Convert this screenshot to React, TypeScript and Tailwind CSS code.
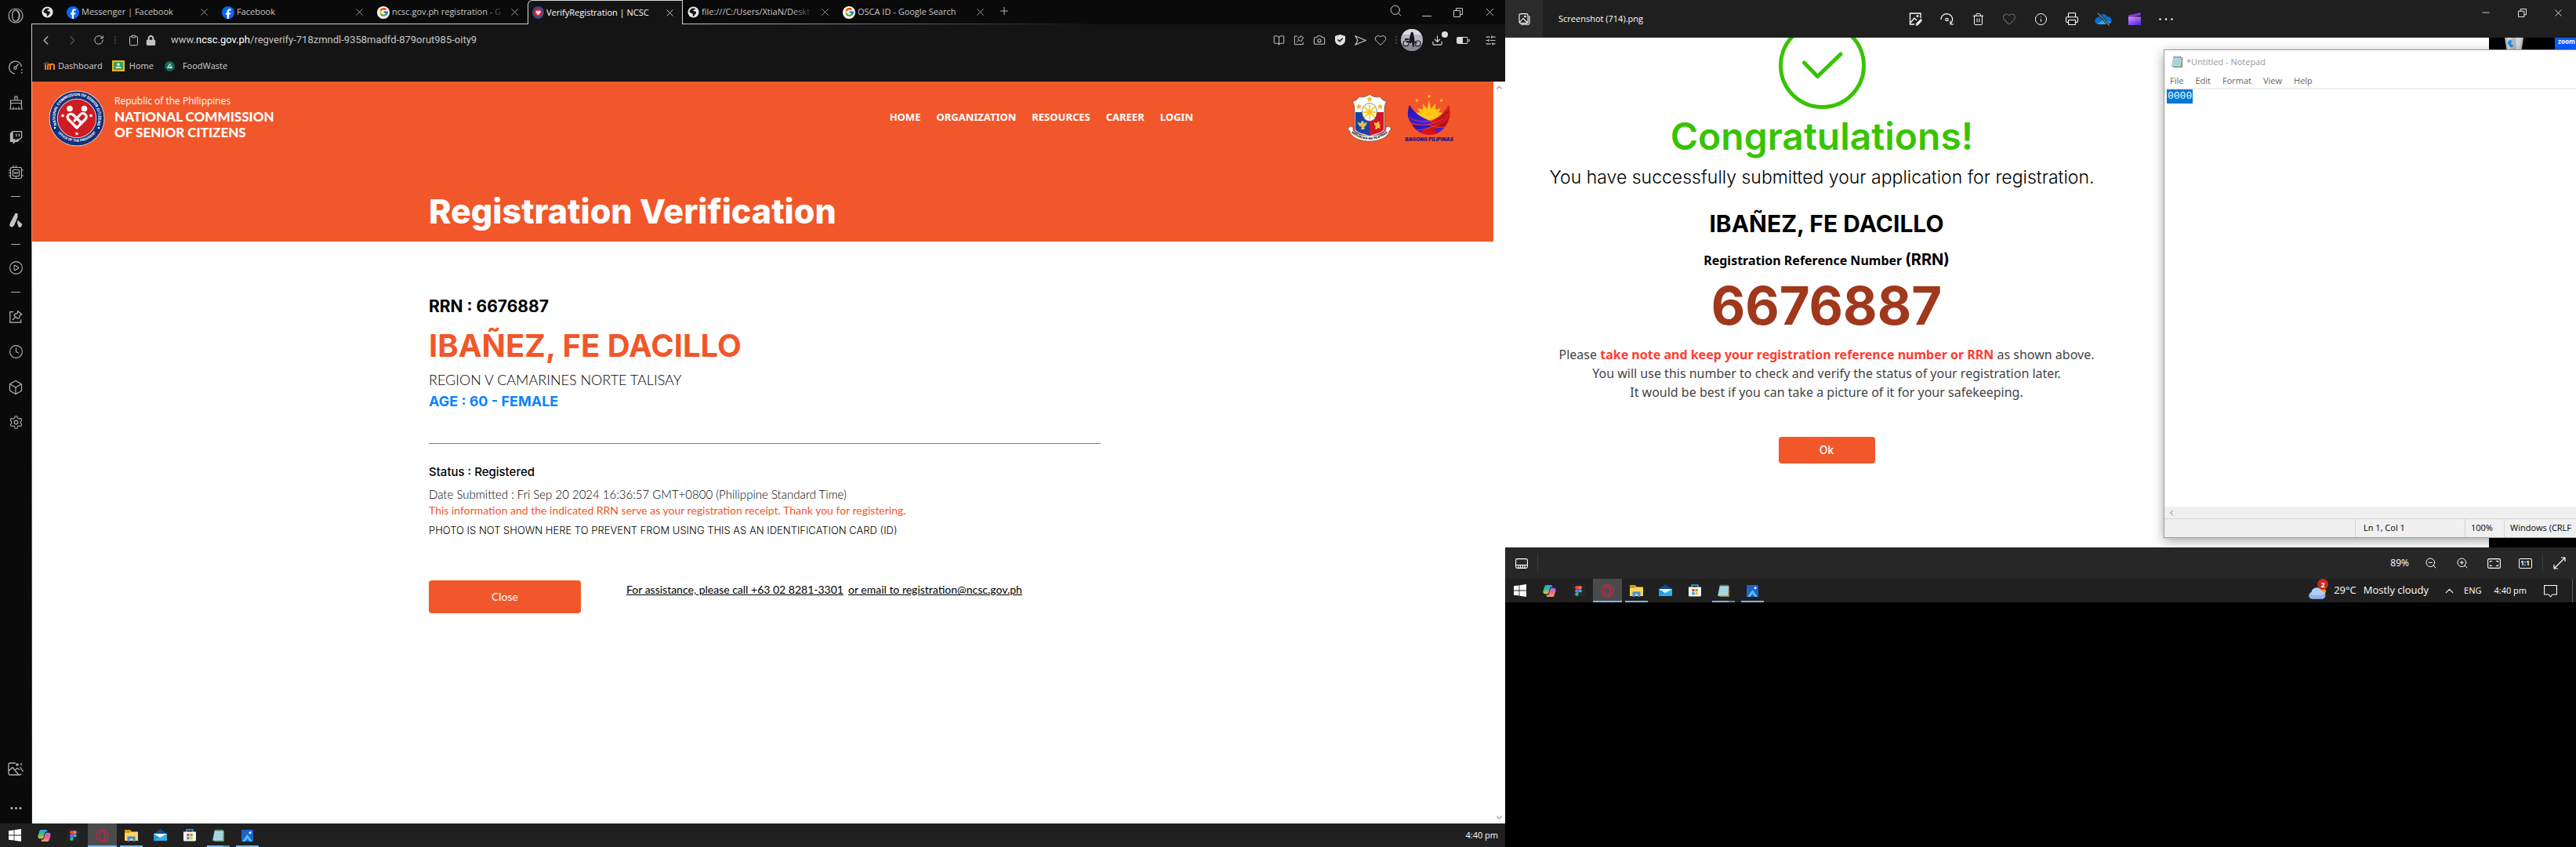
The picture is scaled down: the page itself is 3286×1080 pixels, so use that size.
import React from "react";
import {
  Search, Minus, X, ChevronLeft, ChevronRight, RotateCw, Clipboard, BookOpen, Camera, Heart,
  Clock, Box, Settings, CirclePlay, Ellipsis, Plus, Trash2, Info, Printer,
  ZoomIn, ZoomOut, ChevronUp, ChevronDown, SlidersHorizontal, Download,
} from "lucide-react";
import { FcGoogle } from "react-icons/fc";
import { FaTwitch, FaLock } from "react-icons/fa";

const ui = "font-['Open_Sans','Noto_Sans',sans-serif]";

/* ---------- Shared drawings ---------- */

const OperaIcon = ({ size, color }: { size: number; color: string }) => (
  <svg width={size} height={size} viewBox="0 0 20 20" fill="none" stroke={color} strokeWidth="1.2">
    <circle cx="10" cy="10" r="9" />
    <ellipse cx="10" cy="10" rx="4.4" ry="7.2" />
    <path d="M12 3.2a9 9 0 0 1 0 13.6" />
  </svg>
);

const FacebookIcon = () => (
  <svg width="16" height="16" viewBox="0 0 16 16" className="shrink-0">
    <circle cx="8" cy="8" r="8" fill="#0866ff" />
    <path d="M6.7 16v-5.4H5V8.2h1.7V7c0-2.6 1.2-3.8 3.6-3.8.4 0 1 .1 1.3.2v2.1h-.9c-1.200 0-1.600.5-1.600 1.600v1.100h2.300l-.4 2.400H9.100V16z" fill="#fff" />
  </svg>
);

const GoogleIcon = () => (
  <span className="flex h-4 w-4 shrink-0 items-center justify-center rounded-full bg-white">
    <FcGoogle size={13} />
  </span>
);

const GlobeIcon = () => (
  <svg width="15" height="15" viewBox="0 0 16 16" className="shrink-0">
    <circle cx="8" cy="8" r="7.500" fill="#e8e8ea" />
    <path d="M5 3.500c2-1.500 5-1 6 .5-1.500.2-2 1-3.500 1.200 0 1.300 1.500 1.200 3 1.600 2 .6 1.600 3-.2 4-.8 1-1.300 2.700-2.800 2.700-.6-1 .2-2.500-.6-3.300C5.500 9.500 3.500 9 2.500 7.500 3 6 4 4.500 5 3.500z" fill="#101010" />
  </svg>
);

const PinBoxIcon = ({ size }: { size: number }) => (
  <svg width={size} height={size} viewBox="0 0 20 20" fill="none" stroke="currentColor" strokeWidth="1.400">
    <path d="M7 3H2v15h15.500v-4" />
    <path d="M13 2l5.500 4.500-2.500 1.200-1 4-2.500.5-4.700-4 1-2.200 3.700-1z" />
    <path d="M9.500 10.500L5.500 14.500" />
  </svg>
);

const RestoreIcon = ({ size }: { size: number }) => (
  <svg width={size} height={size} viewBox="0 0 12 12" fill="none" stroke="currentColor" strokeWidth="1">
    <path d="M3.500 3.500V.5h8v8h-3" />
    <path d="M.5 3.500h8v8h-8z" />
  </svg>
);

const SealLogo = ({ size }: { size: number }) => (
  <svg width={size} height={size} viewBox="0 0 72 72" className="shrink-0">
    <defs>
      <path id="sealTop" d="M10 43.500A27.500 27.500 0 1 1 62 43.500" />
      <path id="sealBottom" d="M9 50A31 31 0 0 0 63 50" />
    </defs>
    <circle cx="36" cy="36" r="35.500" fill="#e6d9d0" />
    <circle cx="36" cy="36" r="34.600" fill="#12317c" />
    <circle cx="36" cy="36" r="25.200" fill="#e6c9c0" />
    <circle cx="36" cy="36" r="24.200" fill="#cf1b22" />
    <g fill="#fff" fontFamily="Inter, sans-serif" fontWeight="700" fontSize="4.700">
      <text textAnchor="middle"><textPath href="#sealTop" startOffset="50%">NATIONAL COMMISSION OF SENIOR CITIZENS</textPath></text>
      <text textAnchor="middle" fontSize="4.200"><textPath href="#sealBottom" startOffset="50%">OFFICE OF THE PRESIDENT</textPath></text>
    </g>
    <circle cx="27" cy="23.500" r="3.800" fill="#fff" />
    <circle cx="45.500" cy="23.500" r="3.800" fill="#fff" />
    <path d="M36 48L25.500 37.500c-4-5 2.500-9.500 6-6L41 41M31 43l-1-1M36 48l11-11c4-5-3-10-6.500-6L33 39" fill="none" stroke="#fff" strokeWidth="3.200" strokeLinecap="round" />
    <g fill="#fff">
      <path d="M18 30l.8 1.500 1.700.2-1.200 1.200.3 1.700-1.600-.8-1.600.8.3-1.700-1.200-1.200 1.700-.2z" />
      <path d="M54 30l.8 1.500 1.700.2-1.200 1.200.3 1.700-1.600-.8-1.600.8.3-1.700-1.200-1.200 1.700-.2z" />
      <path d="M36 53l.8 1.500 1.700.2-1.200 1.200.3 1.700-1.600-.8-1.600.8.3-1.700-1.200-1.200 1.700-.2z" />
      <circle cx="8" cy="48" r="1.200" />
      <circle cx="64" cy="48" r="1.200" />
    </g>
  </svg>
);

const star = "M0-3.200L.9-1 3.200-1 1.400.5 2 2.800 0 1.500-2 2.800-1.400.5-3.200-1-.9-1z";
const rays = [0, 45, 90, 135, 180, 225, 270, 315];

const CoatOfArms = () => (
  <svg width="56" height="62" viewBox="0 0 56 62">
    <defs><path id="ribbon" d="M4 50Q28 68 52 50" /></defs>
    <path d="M28 1C31 4 37 6 41 4c2 3 5 6 9 6-3 5-3 9-3 14v22c0 4-8 6-19 10C17 52 9 50 9 46V24c0-5 0-9-3-14 4 0 7-3 9-6 4 2 10 0 13-3z" fill="#fff" stroke="#333" strokeWidth=".6" />
    <path d="M10 24h18v30c-9-3-18-4-18-9z" fill="#1544a8" />
    <path d="M46 24H28v30c9-3 18-4 18-9z" fill="#d4142c" />
    <ellipse cx="28" cy="24" rx="9.500" ry="11.500" fill="#fff" stroke="#333" strokeWidth=".6" />
    <circle cx="28" cy="24" r="3.800" fill="#f8c91c" />
    {rays.map((a) => (
      <path key={a} d="M27 20l.2-5.500h1.600L29 20z" fill="#f8c91c" transform={`rotate(${a} 28 24)`} />
    ))}
    <g fill="#f0c419" stroke="#a87c00" strokeWidth=".3">
      <path d={star} transform="translate(28 7.500)" />
      <path d={star} transform="translate(14.500 17)" />
      <path d={star} transform="translate(41.500 17)" />
    </g>
    <path d="M13 36c1 1 2 2 4 2 0-2 1-3 2-3s2 1 1.500 3c2 0 3-1 4-2 0 4-1 6-3.500 7l1 3h-5l1-3c-3-1-5-3-5-7z" fill="#e6b84a" />
    <path d="M34 37l3 1 2-2c2 0 2 2 1 3l2 1-1 2 1 3-3-1-2 2-2-1 1-3-2-2z" fill="#f4c430" />
    <path d="M2 43c3-2 6 0 5 4 5 6 12 7 21 7s16-1 21-7c-1-4 2-6 5-4 2 2 1 5-1 5 0 7-12 13-25 13S3 55 3 48c-2 0-3-3-1-5z" fill="#fff" stroke="#333" strokeWidth=".5" />
    <text fontFamily="Inter, sans-serif" fontWeight="800" fontSize="4" fill="#111" textAnchor="middle">
      <textPath href="#ribbon" startOffset="50%">REPUBLIKA NG PILIPINAS</textPath>
    </text>
  </svg>
);

const BagongPilipinas = () => (
  <svg width="64" height="62" viewBox="0 0 64 62">
    <defs>
      <linearGradient id="bpRed" x1="0" y1="1" x2="1" y2="0"><stop offset="0" stopColor="#f01818" /><stop offset=".6" stopColor="#b80d18" /><stop offset="1" stopColor="#e01818" /></linearGradient>
      <linearGradient id="bpBlue" x1="0" y1="0" x2="1" y2="1"><stop offset="0" stopColor="#2410b0" /><stop offset="1" stopColor="#4a22e8" /></linearGradient>
    </defs>
    <path d="M7 15C3 27 7 40 16 47c5 4 10 6 16 6s11-1 16-6c9-7 13-20 9-32-5 9-13 17-25 21C20 32 12 24 7 15z" fill="url(#bpRed)" />
    <g fill="#ffc61a">
      <path d={star} transform="translate(32 3.500) scale(.8)" />
      <path d={star} transform="translate(16.500 9) scale(.8)" />
      <path d={star} transform="translate(47.500 9) scale(.8)" />
      <path d="M32 9l2.500 11 5.500-7v8l7-2-3 5 6 1-8 7-10 5-10-5-8-7 6-1-3-5 7 2v-8l5.500 7z" />
    </g>
    <path d="M7 15C3 26 5 34 10 38c10 3 23 3 33-1C28 35 14 27 7 15z" fill="url(#bpBlue)" />
    <path d="M11 40c2 5 6 8 10 9l17-9c-10 2-18 1-27 0zM38 46l14-4c-2 4-6 7-10 8z" fill="url(#bpBlue)" />
    <path d="M57 15C52 24 44 32 32 36l6 3c10-4 18-11 20-18z" fill="url(#bpRed)" />
    <path d="M7 31c14 9 36 6 50-13M9 38c16 6 38 0 48-12M16 47c14-1 30-7 39-15M30 39c8 4 15 5 22 4" fill="none" stroke="#f1572a" strokeWidth=".7" />
    <text x="32" y="60.500" textAnchor="middle" fontFamily="Inter, sans-serif" fontStyle="italic" fontWeight="900" fontSize="6.400" fill="#1c1a86">BAGONG PILIPINAS</text>
  </svg>
);

const NotepadIcon = ({ size }: { size: number }) => (
  <svg width={size} height={size} viewBox="0 0 16 16">
    <path d="M4 2h11v13H3z" fill="#9a8548" />
    <path d="M3.500 1.500H14L13.500 14H1z" fill="#7fc0cc" />
    <path d="M4 3h9.500L13 13H2z" fill="#b4e0e6" />
    <path d="M4 5h9M3.700 7h9M3.400 9h9.200M3 11h9.500" stroke="#7db9c4" strokeWidth=".6" />
    <path d="M4.500.5v2M6.500.5v2M8.500.5v2M10.500.5v2M12.500.5v2" stroke="#777" strokeWidth=".9" />
  </svg>
);

/* ---------- Windows task bar ---------- */

const taskIcons = [
  {
    name: "Copilot",
    icon: (
      <svg width="17" height="17" viewBox="0 0 18 18">
        <defs>
          <linearGradient id="cpA" x1="0" y1="0" x2="0" y2="1"><stop offset="0" stopColor="#27a3f5" /><stop offset=".5" stopColor="#34c08a" /><stop offset="1" stopColor="#f0c828" /></linearGradient>
          <linearGradient id="cpB" x1="0" y1="0" x2="0" y2="1"><stop offset="0" stopColor="#a666f0" /><stop offset=".5" stopColor="#f0609a" /><stop offset="1" stopColor="#f8a060" /></linearGradient>
        </defs>
        <path d="M5 1h6c1.500 0 2 1 2.400 2.500L10 4 8 11c-.5 1.500-1 2-2.500 2H3C1 13 0 11 .5 9L2.500 3C3 1.600 4 1 5 1z" fill="url(#cpA)" />
        <path d="M13 17H7c-1.500 0-2-1-2.400-2.500L8 14l2-7c.5-1.500 1-2 2.500-2H15c2 0 3 2 2.500 4l-2 6c-.5 1.400-1.500 2-2.500 2z" fill="url(#cpB)" />
      </svg>
    ),
  },
  {
    name: "Figma",
    icon: (
      <span className="flex h-4 w-4 items-center justify-center bg-[#262626]">
        <svg width="9" height="13" viewBox="0 0 10 14">
          <path d="M5 0H2.500a2.300 2.300 0 0 0 0 4.660H5z" fill="#f24e1e" />
          <path d="M5 0h2.500a2.300 2.300 0 0 1 0 4.660H5z" fill="#ff7262" />
          <path d="M5 4.660H2.500a2.300 2.300 0 0 0 0 4.660H5z" fill="#a259ff" />
          <circle cx="7.500" cy="7" r="2.300" fill="#1abcfe" />
          <path d="M2.500 9.320H5v2.300a2.400 2.400 0 1 1-2.500-2.300z" fill="#0acf83" />
        </svg>
      </span>
    ),
  },
  { name: "Opera", active: true, icon: <OperaIcon size={17} color="#d3224a" /> },
  {
    name: "File Explorer",
    open: true,
    icon: (
      <svg width="17" height="15" viewBox="0 0 17 15">
        <path d="M0 0h7l1.500 2v2H0z" fill="#d99a0b" />
        <path d="M0 4h6l1-1.500h10V14H0z" fill="#ffd45c" />
        <path d="M3.500 15V8.500h10V15h-3v-3.500h-4V15z" fill="#3f8fdc" />
      </svg>
    ),
  },
  {
    name: "Mail",
    icon: (
      <svg width="17" height="16" viewBox="0 0 17 16">
        <path d="M0 6l8.500-6L17 6z" fill="#0a4c94" />
        <path d="M0 6h17v9H0z" fill="#1b9de8" />
        <path d="M0 6h17l-8.500 5.500z" fill="#eef6fc" />
        <path d="M0 15l17 0V6z" fill="#35c0f4" opacity=".6" />
      </svg>
    ),
  },
  {
    name: "Store",
    icon: (
      <svg width="16" height="16" viewBox="0 0 16 16">
        <path d="M4 4V1h8v3" fill="none" stroke="#36b0e8" strokeWidth="1.300" />
        <path d="M0 3.500h16V14a1.500 1.500 0 0 1-1.500 1.500h-13A1.500 1.500 0 0 1 0 14z" fill="#f5f5f5" />
        <path d="M4.300 6h3.200v3.200H4.300z" fill="#e8492a" />
        <path d="M8.500 6h3.200v3.200H8.500z" fill="#76b82a" />
        <path d="M4.300 10.200h3.200v3.200H4.300z" fill="#2196e8" />
        <path d="M8.500 10.200h3.200v3.200H8.500z" fill="#fbb810" />
      </svg>
    ),
  },
  { name: "Notepad", open: true, stacked: true, icon: <NotepadIcon size={17} /> },
  {
    name: "Photos",
    open: true,
    icon: (
      <svg width="15" height="15" viewBox="0 0 15 15">
        <rect width="15" height="15" rx="1.500" fill="#1e63c8" />
        <path d="M1 15l6.500-9L14 15z" fill="#4cc3ff" />
        <path d="M4.500 15l3-4 3 4z" fill="#1e63c8" />
        <circle cx="11" cy="3.800" r="1.500" fill="#fff" />
      </svg>
    ),
  },
];

const Taskbar = ({ children }: { children: React.ReactNode }) => (
  <footer className={`${ui} flex h-[30px] shrink-0 items-stretch bg-[#202020] text-white`}>
    <button aria-label="Start" className="flex w-[38px] items-center justify-center">
      <svg width="16" height="16" viewBox="0 0 16 16" fill="#fff">
        <path d="M0 2.300l6.600-.9v6.200H0zM7.400 1.300L16 0v7.600H7.400zM0 8.400h6.600v6.200L0 13.700zM7.400 8.400H16V16l-8.600-1.300z" />
      </svg>
    </button>
    {taskIcons.map((t) => (
      <button
        key={t.name}
        aria-label={t.name}
        className={`relative flex w-[37px] items-center justify-center ${t.active ? "bg-[#4b4b4b]" : ""}`}
      >
        {t.icon}
        {t.active && <span className="absolute inset-x-0 bottom-0 h-0.5 bg-[#76b9ed]" />}
        {t.open && <span className="absolute inset-x-1 bottom-0 h-0.5 bg-[#76b9ed]" />}
        {t.stacked && <span className="absolute right-1 bottom-0 h-0.5 w-2 bg-[#5b8cb4]" />}
      </button>
    ))}
    <div className="ml-auto flex items-center">{children}</div>
  </footer>
);

/* ---------- Browser window ---------- */

const Cell = ({ label, h, children }: { label: string; h: string; children: React.ReactNode }) => (
  <button aria-label={label} className={`flex w-10 shrink-0 items-center justify-center ${h}`}>{children}</button>
);
const Dash = () => (
  <span className="flex h-3.5 w-10 shrink-0 items-center justify-center"><span className="h-px w-3 bg-[#b0b0b0]" /></span>
);

const Sidebar = () => (
  <nav className="flex w-10 shrink-0 flex-col bg-[#0a0a0a] text-[#b4b4b4]">
    <Cell label="Opera" h="h-10"><OperaIcon size={20} color="#b4b4b4" /></Cell>
    <div className="h-[23px]" />
    <Cell label="Speed" h="h-[45px]">
      <svg width="18" height="18" viewBox="0 0 18 18" fill="none" stroke="currentColor" strokeWidth="1.200">
        <path d="M8 17A8 8 0 1 1 16.500 8" /><circle cx="8.500" cy="9.500" r="1.700" /><path d="M9.500 8l3-3.500" /><path d="M16.800 11v1.500M16.800 15v1.500" strokeWidth="1.500" />
      </svg>
    </Cell>
    <Cell label="Cleaner" h="h-[45px]">
      <svg width="17" height="18" viewBox="0 0 17 18" fill="none" stroke="currentColor" strokeWidth="1.200">
        <path d="M7 6V1h3v5M1.500 6h14v3.500h-14zM2 9.500L1 17h15l-1-7.500M5 17v-2.500M8.500 17v-1.500M12 17v-2.500" />
      </svg>
    </Cell>
    <Cell label="Twitch" h="h-[45px]"><FaTwitch size={17} /></Cell>
    <Cell label="Control" h="h-[45px]">
      <svg width="19" height="19" viewBox="0 0 19 19" fill="none" stroke="currentColor" strokeWidth="1.200">
        <rect x="2.500" y="2.500" width="14" height="14" rx="1.500" /><rect x="5.500" y="5.500" width="8" height="8" rx="1" /><path d="M8 8v3M11 8v3M8 9.500h3" />
        <path d="M6 2.500V0M9.500 2.500V0M0 6h2.500M0 9.500h2.500M0 13h2.500M16.500 6H19M16.500 13H19M9.500 13.500v3" />
      </svg>
    </Cell>
    <Dash />
    <Cell label="Aria" h="h-[47px]">
      <svg width="17" height="18" viewBox="0 0 17 18" fill="#c4c4c4">
        <path d="M7.500 0h3v5L6 15.500 3 18 0 15.500 1 12z" /><path d="M10.500 8.500l6 5.500-1.500 3.500-3 .5-2-5z" />
      </svg>
    </Cell>
    <Dash />
    <Cell label="Player" h="h-[47px]"><CirclePlay size={19} strokeWidth={1.4} /></Cell>
    <Dash />
    <div className="h-0.5" />
    <Cell label="Pinboards" h="h-[45px]"><PinBoxIcon size={18} /></Cell>
    <Cell label="History" h="h-[45px]"><Clock size={19} strokeWidth={1.4} /></Cell>
    <Cell label="Extensions" h="h-[45px]"><Box size={20} strokeWidth={1.4} /></Cell>
    <Cell label="Settings" h="h-[45px]"><Settings size={19} strokeWidth={1.4} /></Cell>
    <div className="mt-auto" />
    <Cell label="Wallpaper" h="h-[50px]">
      <svg width="20" height="17" viewBox="0 0 20 17" fill="none" stroke="currentColor" strokeWidth="1.300">
        <path d="M10 1H2.500A1.500 1.500 0 0 0 1 2.500v12A1.500 1.500 0 0 0 2.500 16h13a1.500 1.500 0 0 0 1.500-1.500M1 11l5-4.500L14 16M9 10l3-2.500 3 2" />
        <path d="M12 1v4M10 3h4M17 1v3M15.500 6l4 6" />
      </svg>
    </Cell>
    <div className="h-[5px]" />
    <Cell label="More" h="h-10"><Ellipsis size={19} /></Cell>
  </nav>
);

const tabs = [
  { title: "Messenger | Facebook", icon: <FacebookIcon /> },
  { title: "Facebook", icon: <FacebookIcon /> },
  { title: "ncsc.gov.ph registration - G", icon: <GoogleIcon />, fade: true },
  {
    title: "VerifyRegistration | NCSC",
    active: true,
    icon: (
      <svg width="15" height="16" viewBox="0 0 15 16" className="shrink-0">
        <ellipse cx="7.500" cy="8" rx="7.500" ry="8" fill="#2b4a92" />
        <circle cx="7.500" cy="8" r="5.400" fill="#d8222c" />
        <path d="M7.500 11.500L4.500 8c-1-2 1.500-3.500 3-1.500 1.500-2 4-.5 3 1.500z" fill="#f4e4e4" />
      </svg>
    ),
  },
  { title: "file:///C:/Users/XtiaN/Deskt", icon: <GlobeIcon />, fade: true },
  { title: "OSCA ID - Google Search", icon: <GoogleIcon /> },
];

const TabBar = () => (
  <div className="relative flex h-[31px] items-stretch bg-[#0a0a0a] text-[#c8c8c8]">
    <span className="absolute bottom-0 left-0 h-px w-[1360px] bg-linear-to-r from-[#cfcfcf] from-60% to-transparent" />
    <button aria-label="Pinned tab" className="flex w-[38px] items-center justify-center pb-px"><GlobeIcon /></button>
    {tabs.map((t) => (
      <div
        key={t.title}
        className={`relative flex w-[198px] min-w-0 items-center pr-2 text-[11px] ${
          t.active ? "rounded-tl-md border-x border-t border-[#d8d8d8] bg-[#141414] pl-[5px] text-white" : "border-x border-transparent pl-[5px]"
        }`}
      >
        <button className="flex min-w-0 flex-1 items-center gap-[3px] text-left">
          {t.icon}
          <span className="overflow-hidden whitespace-nowrap">
            {t.fade ? (
              <>{t.title.slice(0, -4)}<span className="bg-linear-to-r from-[#c8c8c8] to-[#333] bg-clip-text text-transparent">{t.title.slice(-4)}</span></>
            ) : t.title}
          </span>
        </button>
        <button aria-label={`Close ${t.title}`} className="shrink-0"><X size={15} strokeWidth={1.2} /></button>
      </div>
    ))}
    <button aria-label="New tab" className="flex w-7 items-center justify-center pb-1"><Plus size={16} strokeWidth={1.3} /></button>
    <div className="ml-auto flex">
      <button aria-label="Search tabs" className="flex w-10 items-center justify-center pb-1"><Search size={17} strokeWidth={1.4} /></button>
      <button aria-label="Minimize" className="flex w-10 items-end justify-center pb-2.5"><span className="h-px w-3 bg-[#c8c8c8]" /></button>
      <button aria-label="Restore" className="flex w-10 items-center justify-center"><RestoreIcon size={12} /></button>
      <button aria-label="Close window" className="flex w-10 items-center justify-center"><X size={17} strokeWidth={1.3} /></button>
    </div>
  </div>
);

const Toolbar = () => (
  <div className="flex h-10 items-center text-[#c4c4c4]">
    <button aria-label="Back" className="flex w-[34px] items-center justify-center"><ChevronLeft size={19} strokeWidth={1.4} /></button>
    <button aria-label="Forward" className="flex w-[34px] items-center justify-center text-[#555]"><ChevronRight size={19} strokeWidth={1.4} /></button>
    <button aria-label="Reload" className="flex w-[34px] items-center justify-center"><RotateCw size={14} strokeWidth={1.7} /></button>
    <span className="mx-[3px] h-2.5 border-l-2 border-dotted border-[#3a3a3a]" />
    <button aria-label="Copy address" className="ml-[9px] flex w-5 justify-center"><Clipboard size={15} strokeWidth={1.6} /></button>
    <button aria-label="Site security" className="flex w-6 justify-center"><FaLock size={13} /></button>
    <p className="ml-3.5 min-w-0 flex-1 font-['Roboto',sans-serif] text-[13px]">
      www.<span className="text-white">ncsc.gov.ph</span>/regverify-718zmndl-9358madfd-879orut985-oity9
    </p>
    <div className="flex items-center">
      <button aria-label="Reader" className="flex w-[26px] justify-center"><BookOpen size={15} strokeWidth={1.6} /></button>
      <button aria-label="Pin" className="flex w-[26px] justify-center"><PinBoxIcon size={14} /></button>
      <button aria-label="Snapshot" className="flex w-[26px] justify-center"><Camera size={16} strokeWidth={1.6} /></button>
      <button aria-label="Shield" className="flex w-[26px] justify-center">
        <svg width="13" height="14" viewBox="0 0 13 14"><path d="M6.500 0L13 2v5c0 4-3 6-6.500 7C3 13 0 11 0 7V2z" fill="#e0e0e0" /><path d="M3.500 6.500l2.300 2.300L9.800 4.800" fill="none" stroke="#141414" strokeWidth="1.500" /></svg>
      </button>
      <button aria-label="Send" className="flex w-[26px] justify-center">
        <svg width="15" height="13" viewBox="0 0 15 13" fill="none" stroke="currentColor" strokeWidth="1.200"><path d="M1 1l13 5.500L1 12l3-5.500z" /></svg>
      </button>
      <button aria-label="Favourite" className="flex w-[26px] justify-center"><Heart size={16} strokeWidth={1.5} /></button>
      <span className="mr-[5px] ml-1.5 h-2.5 border-l-2 border-dotted border-[#3a3a3a]" />
      <button aria-label="Profile" className="h-7 w-7 overflow-hidden rounded-full">
        <svg width="28" height="28" viewBox="0 0 28 28">
          <path d="M0 0h28v28H0z" fill="#b9b6c4" /><path d="M0 0h28v7H0z" fill="#d9dbe4" /><path d="M0 20h28v8H0z" fill="#8b8896" />
          <path d="M12.500 6c0-3 3.500-3 3.500 0l1.500 8-1 9h-1.500l-1-6-3 2-.5-6z" fill="#14161f" />
          <g fill="none" stroke="#1b1d26" strokeWidth="1.200"><circle cx="6.500" cy="18.500" r="3.500" /><circle cx="21.500" cy="18.500" r="3.500" /><path d="M7 17l6-2 8 3M5 13h5" strokeWidth="1.800" /></g>
        </svg>
      </button>
      <button aria-label="Downloads" className="relative ml-2 flex w-5 justify-center text-[#e4e4e4]">
        <Download size={15} strokeWidth={1.7} />
        <span className="absolute -top-1 -right-1 h-2 w-2 rounded-full bg-[#e0e0e0]" />
      </button>
      <button aria-label="Battery saver" className="ml-[13px] flex w-5 justify-center">
        <svg width="17" height="9" viewBox="0 0 17 9"><rect x=".5" y=".5" width="13.500" height="8" rx="1" fill="none" stroke="#d8d8d8" /><path d="M1 1h7v7H1zM15.500 3h1.200v3h-1.200z" fill="#d8d8d8" /></svg>
      </button>
      <button aria-label="Easy setup" className="mr-[7px] ml-[13px] flex w-6 justify-center"><SlidersHorizontal size={15} strokeWidth={1.7} /></button>
    </div>
  </div>
);

const Bookmarks = () => (
  <div className={`${ui} flex h-[33px] items-start pt-[3px] text-[11px] leading-5 text-[#d0d0d0]`}>
    <a href="#dashboard" className="ml-[13px] flex items-center gap-1">
      <svg width="16" height="12" viewBox="0 0 16 12" fill="none">
        <path d="M4 11V4M7 11V6c0-2 2-2.500 3-1v6M10 11V6c0-3 5-3 5 0v5" stroke="#f98012" strokeWidth="2" />
        <path d="M0 3l6-2 3 1-5 3z" fill="#5a4a40" />
      </svg>
      Dashboard
    </a>
    <a href="#home" className="ml-3 flex items-center gap-1.5">
      <svg width="16" height="14" viewBox="0 0 16 14">
        <path d="M0 0h16v14H0z" fill="#f5b912" /><path d="M2 2h12v10H2z" fill="#3f9e5c" /><circle cx="8" cy="5.200" r="1.600" fill="#fff" /><path d="M4.500 10c0-3 7-3 7 0z" fill="#fff" />
      </svg>
      Home
    </a>
    <a href="#foodwaste" className="ml-3.5 flex items-center gap-2.5">
      <svg width="13" height="13" viewBox="0 0 13 13"><circle cx="6.500" cy="6.500" r="6.500" fill="#116a56" /><path d="M6.500 3L9.500 8.500h-6zM5 6l3 2" fill="none" stroke="#e8f4f0" strokeWidth="1" /></svg>
      FoodWaste
    </a>
  </div>
);

const lato = "font-['Lato',sans-serif]";
const inter = "font-['Inter',sans-serif]";

const NcscPage = () => (
  <main className="flex min-h-0 flex-1">
    <div className="min-w-0 flex-1 bg-white">
      <header className="bg-[#f1572a] pb-[11px] text-white">
        <div className="flex items-start pt-[11px] pr-[50px] pl-[21px]">
          <SealLogo size={72} />
          <div className={`${lato} ml-3 pt-1`}>
            <p className={`${ui} text-xs leading-5`}>Republic of the Philippines</p>
            <p className="text-[17px] leading-5 font-black">NATIONAL COMMISSION<br />OF SENIOR CITIZENS</p>
          </div>
          <nav className="ml-auto flex gap-5 pt-6 font-['Noto_Sans',sans-serif] text-[13px] leading-5 font-bold">
            {["HOME", "ORGANIZATION", "RESOURCES", "CAREER", "LOGIN"].map((n) => (
              <a key={n} href={`#${n.toLowerCase()}`}>{n}</a>
            ))}
          </nav>
          <div className="ml-[197px] flex gap-4 pt-1"><CoatOfArms /><BagongPilipinas /></div>
        </div>
        <h1 className={`${inter} mt-[54px] pl-[506px] text-[43px] leading-[56px] font-extrabold`}>Registration Verification</h1>
      </header>
      <section className={`${lato} pt-[67px] pl-[506px] text-black`}>
        <p className={`${inter} text-[21px] leading-8 font-bold`}>RRN : 6676887</p>
        <h2 className={`${inter} mt-2.5 text-[40px] leading-[48px] font-bold text-[#f1572a]`}>IBAÑEZ, FE DACILLO</h2>
        <p className="mt-[5px] text-lg leading-7 font-light">REGION V CAMARINES NORTE TALISAY</p>
        <p className={`${inter} text-lg leading-7 font-bold text-[#0a84ff]`}>AGE : 60 - FEMALE</p>
        <hr className="mt-[39px] w-[857px] max-w-full border-[#f1572a]" />
        <p className={`${inter} mt-6 text-[15px] leading-6 font-medium`}>Status : Registered</p>
        <p className="mt-[5px] text-[15px] leading-[22px] font-light">Date Submitted : Fri Sep 20 2024 16:36:57 GMT+0800 (Philippine Standard Time)</p>
        <p className="text-sm leading-5 text-[#f1572a]">This information and the indicated RRN serve as your registration receipt. Thank you for registering.</p>
        <p className={`${inter} mt-[5px] text-[13px] leading-5 font-light`}>PHOTO IS NOT SHOWN HERE TO PREVENT FROM USING THIS AS AN IDENTIFICATION CARD (ID)</p>
        <div className="mt-[54px] flex items-start">
          <button className="h-[42px] w-[194px] rounded-sm bg-[#f1572a] text-sm text-white">Close</button>
          <p className="ml-[58px] flex gap-1.5 text-sm leading-6">
            <a href="tel:+630282813301" className="underline">For assistance, please call +63 02 8281-3301</a>
            <a href="mailto:registration@ncsc.gov.ph" className="underline">or email to registration@ncsc.gov.ph</a>
          </p>
        </div>
      </section>
    </div>
    <div className="flex w-[15px] flex-col items-center justify-between bg-white py-0.5 text-[#b8b8b8]">
      <ChevronUp size={11} strokeWidth={4} />
      <ChevronDown size={11} strokeWidth={4} />
    </div>
  </main>
);

const BrowserWindow = () => (
  <section className={`${ui} flex min-h-screen min-w-0 flex-[1920] flex-col`}>
    <div className="flex flex-1 items-stretch bg-[#0a0a0a]">
      <Sidebar />
      <div className="mt-[30px] w-px shrink-0 bg-linear-to-b from-[#d0d0d0] to-[#222]" />
      <div className="flex min-w-0 flex-1 flex-col bg-[#141414]">
        <TabBar />
        <Toolbar />
        <Bookmarks />
        <NcscPage />
      </div>
    </div>
    <Taskbar><span className="pr-[9px] text-[11px]">4:40 pm</span></Taskbar>
  </section>
);

/* ---------- Photos window ---------- */

const PhotosHeader = () => (
  <header className={`${ui} flex h-12 items-stretch bg-[#1f1f1f] text-white`}>
    <div className="flex flex-1 items-center">
      <button aria-label="Gallery" className="flex h-12 w-12 items-center justify-center bg-[#2b2b2b]">
        <svg width="15" height="15" viewBox="0 0 15 15" fill="none" stroke="currentColor" strokeWidth="1.100">
          <rect x="1" y=".6" width="11" height="12" rx="2" /><path d="M3 14.300h8.500a2.500 2.500 0 0 0 2.500-2.500V3M1.500 11.500L6 6.500l5.500 5.500" /><circle cx="8.500" cy="4" r=".8" />
        </svg>
      </button>
      <h2 className="ml-5 text-[11px]">Screenshot (714).png</h2>
    </div>
    <div className="flex items-center">
      <button aria-label="Edit" className="flex w-10 justify-center">
        <svg width="17" height="17" viewBox="0 0 17 17" fill="none" stroke="currentColor" strokeWidth="1.300">
          <path d="M15 7V1H1.500v14H7M2 13l5-6 3 3" /><circle cx="11" cy="4.500" r=".9" /><path d="M15.500 8l-6 6-.5 2.500 2.500-.5 5-5.500z" fill="currentColor" strokeWidth=".6" />
        </svg>
      </button>
      <button aria-label="Rotate" className="flex w-10 justify-center">
        <svg width="17" height="17" viewBox="0 0 17 17" fill="none" stroke="currentColor" strokeWidth="1.200">
          <path d="M1 9a7.300 7.300 0 1 1 12 5.500M13 10.500v4.500h4" /><rect x="7" y="7.500" width="3" height="3" rx=".8" />
        </svg>
      </button>
      <button aria-label="Delete" className="flex w-10 justify-center"><Trash2 size={17} strokeWidth={1.4} /></button>
      <button aria-label="Favourite" className="flex w-10 justify-center text-[#6a6a6a]"><Heart size={18} strokeWidth={1.4} /></button>
      <button aria-label="Info" className="flex w-10 justify-center"><Info size={17} strokeWidth={1.4} /></button>
      <button aria-label="Print" className="flex w-10 justify-center"><Printer size={18} strokeWidth={1.5} /></button>
      <button aria-label="OneDrive" className="flex w-10 justify-center">
        <svg width="22" height="17" viewBox="0 0 22 17">
          <path d="M5 15a4.500 4.500 0 0 1-.5-9A6.500 6.500 0 0 1 16 5a5 5 0 0 1 1 10z" fill="#0a6ccb" /><path d="M3 14.500L12 9l8.500 3.500A4 4 0 0 1 17 15H5z" fill="#28a8ea" /><path d="M4 .5L18.500 16.500" stroke="#1f1f1f" strokeWidth="3" /><path d="M4 .5L18.500 16.500" stroke="#c8c8c8" strokeWidth="1" />
        </svg>
      </button>
      <button aria-label="Clipchamp" className="flex w-10 justify-center">
        <svg width="16" height="16" viewBox="0 0 16 16">
          <defs><linearGradient id="cc" x1="0" y1="0" x2=".6" y2="1"><stop offset="0" stopColor="#e28cf6" /><stop offset="1" stopColor="#5a32e6" /></linearGradient></defs>
          <path d="M0 3.500L15.500 0v3.500L0 7z" fill="#7a3fd0" /><path d="M0 5.500h16V16H0z" fill="url(#cc)" />
        </svg>
      </button>
      <button aria-label="See more" className="flex w-10 justify-center">
        <svg width="18" height="3" viewBox="0 0 18 3" fill="currentColor"><circle cx="1.500" cy="1.500" r="1.200" /><circle cx="9" cy="1.500" r="1.200" /><circle cx="16.500" cy="1.500" r="1.200" /></svg>
      </button>
    </div>
    <div className="flex flex-1 justify-end">
      <button aria-label="Minimize" className="flex h-8 w-[46px] items-center justify-center"><Minus size={14} strokeWidth={1.3} /></button>
      <button aria-label="Restore" className="flex h-8 w-[46px] items-center justify-center"><RestoreIcon size={11} /></button>
      <button aria-label="Close" className="flex h-8 w-[46px] items-center justify-center"><X size={15} strokeWidth={1.3} /></button>
    </div>
  </header>
);

const Confirmation = () => (
  <div className={`${inter} flex w-[808px] max-w-full flex-col items-center text-center text-black`}>
    <svg width="111" height="111" viewBox="0 0 111 111" fill="none" stroke="#37c400" strokeWidth="5" className="-mt-5 shrink-0">
      <circle cx="55.500" cy="55.500" r="53" />
      <path d="M32.500 52L49.500 69.500 79 41" strokeLinecap="round" strokeLinejoin="round" />
    </svg>
    <h2 className="mt-[5px] text-5xl leading-[60px] font-semibold text-[#37c400]">Congratulations!</h2>
    <p className="mt-1.5 text-[23px] leading-8 font-light">You have successfully submitted your application for registration.</p>
    <div className="flex flex-col items-center pl-3">
      <p className="mt-[23px] text-[30px] leading-10 font-bold">IBAÑEZ, FE DACILLO</p>
      <p className="mt-3 flex h-7 items-baseline gap-1 text-base leading-7 font-bold">
        <span className="font-['Noto_Sans',sans-serif]">Registration Reference Number</span>
        <span className="text-xl">(RRN)</span>
      </p>
      <p className="mt-[9px] text-[67px] leading-[72px] font-bold text-[#a0381c]">6676887</p>
      <p className="mt-3.5 font-['Noto_Sans',sans-serif] text-base leading-6 text-[#444]">
        Please <strong className="font-bold text-[#ff3b30]">take note and keep your registration reference number or RRN</strong> as shown above.<br />
        You will use this number to check and verify the status of your registration later.<br />
        It would be best if you can take a picture of it for your safekeeping.
      </p>
      <button className="mt-[45px] mb-[107px] h-[34px] w-[123px] rounded-sm bg-[#f1572a] text-sm font-medium text-white">Ok</button>
    </div>
  </div>
);

const NotepadWindow = () => (
  <section className={`${ui} absolute top-[15px] right-0 bottom-3 left-[840px] flex flex-col border-y border-l border-[#9a9a9a] bg-white text-[11px] shadow-[0_4px_14px_rgba(0,0,0,0.35)]`}>
    <h2 className="flex h-[30px] items-center gap-1 pl-2 text-[#999]"><NotepadIcon size={16} />*Untitled - Notepad</h2>
    <nav className="flex h-5 items-center gap-[15px] border-b-2 border-[#f0f0f0] pl-[7px] leading-4 text-[#666]">
      {["File", "Edit", "Format", "View", "Help"].map((m) => <button key={m}>{m}</button>)}
    </nav>
    <div className="flex-1 pl-[3px]">
      <span className="inline-block bg-[#0078d7] px-px font-['Liberation_Mono',monospace] text-[13px] leading-[18px] text-white">0000</span>
    </div>
    <div className="flex h-4 items-center border-b border-[#d4d4d4] bg-[#f0f0f0] pl-1 text-[#b0b0b0]"><ChevronLeft size={10} strokeWidth={4} /></div>
    <div className="flex h-[23px] items-stretch bg-[#f0f0f0] text-black">
      <span className="flex-1" />
      <span className="flex w-[140px] items-center border-l border-[#d4d4d4] pl-2.5">Ln 1, Col 1</span>
      <span className="flex w-[50px] items-center border-l border-[#d4d4d4] pl-[7px]">100%</span>
      <span className="flex w-[92px] items-center border-l border-[#d4d4d4] pl-[7px] whitespace-nowrap">Windows (CRLF</span>
    </div>
  </section>
);

const Desktop = () => (
  <div className="relative flex min-w-0 flex-[111] justify-end gap-10 overflow-hidden bg-black">
    <svg width="24" height="16" viewBox="0 0 24 16" className="shrink-0">
      <path d="M0 0h24l-2.500 16h-19z" fill="#b4b8bc" /><path d="M3 0h6L7 16H4zM14 0h7l-2 16h-4z" fill="#d5d8da" />
      <path d="M4 5l3-3 3 3-2 1 1 3 2 0-1 3-3 0-3-4z" fill="#2b8fe0" />
    </svg>
    <div className="h-4 w-[27px] shrink-0 bg-[#0b5cff] pl-1 text-[8px] leading-[10px] font-bold text-white">zoom</div>
  </div>
);

const PhotosWindow = () => (
  <section className="flex min-w-0 flex-[1366] flex-col bg-black">
    <PhotosHeader />
    <div className="relative flex overflow-hidden">
      <div className="min-w-0 flex-[1255] bg-white"><Confirmation /></div>
      <Desktop />
      <NotepadWindow />
    </div>
    <div className={`${ui} flex h-10 items-center bg-[#272727] text-xs text-white`}>
      <button aria-label="Filmstrip" className="flex h-6 w-[42px] items-center justify-center border-r border-[#3a3a3a]">
        <svg width="16" height="13" viewBox="0 0 16 13" fill="none" stroke="currentColor" strokeWidth="1.100"><rect x=".6" y=".6" width="14.800" height="11.800" rx="1.800" /><path d="M1 8.500h14M4 8.500v3.500M6.700 8.500v3.500M9.400 8.500v3.500M12 8.500v3.500" /></svg>
      </button>
      <span className="mr-2 ml-auto">89%</span>
      <button aria-label="Zoom out" className="flex w-10 justify-center"><ZoomOut size={16} strokeWidth={1.5} /></button>
      <button aria-label="Zoom in" className="flex w-10 justify-center"><ZoomIn size={16} strokeWidth={1.5} /></button>
      <button aria-label="Fit" className="flex w-10 justify-center">
        <svg width="17" height="13" viewBox="0 0 17 13" fill="none" stroke="currentColor" strokeWidth="1.100"><rect x=".6" y=".6" width="15.800" height="11.800" rx="1.500" /><path d="M3.500 5V3.500H6M11 3.500h2.500V5M13.500 8v1.500H11M6 9.500H3.500V8" /></svg>
      </button>
      <button aria-label="Actual size" className="flex w-10 justify-center">
        <span className="flex h-[13px] w-[17px] items-center justify-center rounded-xs border border-white text-[8px] leading-none font-bold">1:1</span>
      </button>
      <button aria-label="Full screen" className="ml-0.5 flex h-6 w-[43px] items-center justify-center border-l border-[#3a3a3a]">
        <svg width="16" height="16" viewBox="0 0 16 16" fill="none" stroke="currentColor" strokeWidth="1.200"><path d="M1 15L15 1M10 1h5v5M1 10v5h5" /></svg>
      </button>
    </div>
    <Taskbar>
      <button className="flex items-center gap-[9px] text-[13px]">
        <span className="relative">
          <svg width="24" height="16" viewBox="0 0 24 16" className="mt-1.5">
            <circle cx="18" cy="6" r="5" fill="#f0a020" /><path d="M5 15.500a4.500 4.500 0 0 1-.5-8.500A7 7 0 0 1 18 6a5 5 0 0 1 1 9.500z" fill="#b4cdf8" /><path d="M5 15.500A4 4 0 0 1 2 9c6 3 14 3 20 0 1 3 0 6-3 6.500z" fill="#8fb2f2" />
          </svg>
          <span className="absolute -top-1 -right-0.5 flex h-3.5 w-3.5 items-center justify-center rounded-full bg-[#c42b1c] text-[9px] leading-none font-bold">2</span>
        </span>
        <span>29°C</span>
        <span>Mostly cloudy</span>
      </button>
      <button aria-label="Hidden icons" className="ml-[18px]"><ChevronUp size={17} strokeWidth={1.600} /></button>
      <span className="ml-2.5 text-[11px]">ENG</span>
      <span className="ml-4 text-[11px]">4:40 pm</span>
      <button aria-label="Notifications" className="ml-[22px]">
        <svg width="17" height="17" viewBox="0 0 17 17" fill="none" stroke="currentColor" strokeWidth="1.100"><path d="M.6 1.500h15.800v11.500H11L8.500 16 6 13H.6z" /></svg>
      </button>
      <span className="mr-1 ml-[19px] h-full w-px bg-[#5a5a5a]" />
    </Taskbar>
  </section>
);

export default function App() {
  return (
    <div className="flex min-h-screen w-full items-stretch bg-black">
      <BrowserWindow />
      <PhotosWindow />
    </div>
  );
}
